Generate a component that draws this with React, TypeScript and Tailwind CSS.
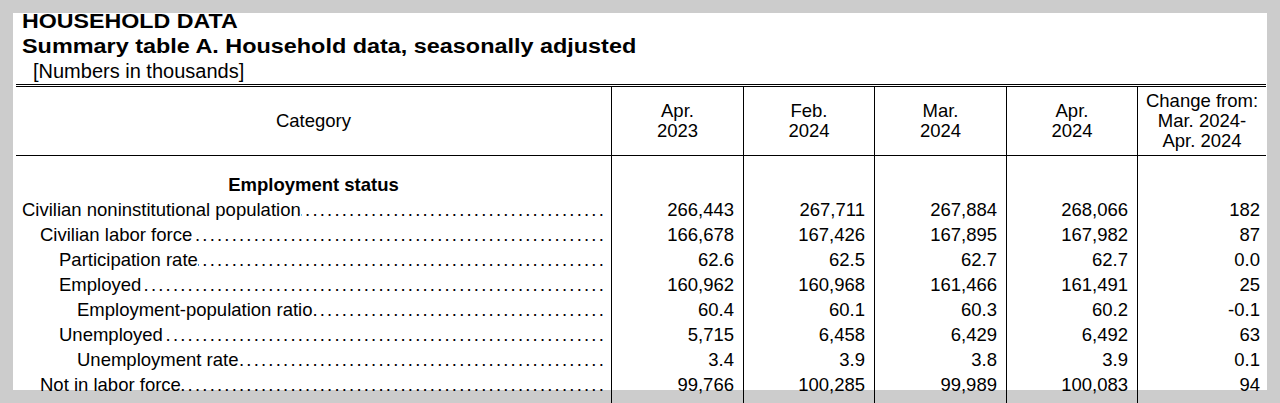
import React from "react";

type Row = { label: string; indent: number; v: string[] };

const rows: Row[] = [
  { label: "Civilian noninstitutional population", indent: 0, v: ["266,443", "267,711", "267,884", "268,066", "182"] },
  { label: "Civilian labor force", indent: 1, v: ["166,678", "167,426", "167,895", "167,982", "87"] },
  { label: "Participation rate", indent: 2, v: ["62.6", "62.5", "62.7", "62.7", "0.0"] },
  { label: "Employed", indent: 2, v: ["160,962", "160,968", "161,466", "161,491", "25"] },
  { label: "Employment-population ratio", indent: 3, v: ["60.4", "60.1", "60.3", "60.2", "-0.1"] },
  { label: "Unemployed", indent: 2, v: ["5,715", "6,458", "6,429", "6,492", "63"] },
  { label: "Unemployment rate", indent: 3, v: ["3.4", "3.9", "3.8", "3.9", "0.1"] },
  { label: "Not in labor force", indent: 1, v: ["99,766", "100,285", "99,989", "100,083", "94"] },
];

const indentClass = ["pl-[6px]", "pl-[24px]", "pl-[43px]", "pl-[61px]"];

const headers: string[][] = [
  ["Apr.", "2023"],
  ["Feb.", "2024"],
  ["Mar.", "2024"],
  ["Apr.", "2024"],
  ["Change from:", "Mar. 2024-", "Apr. 2024"],
];

const DOTS = ".".repeat(140);

export default function App() {
  return (
    <div
      className="h-[403px] w-[1280px] overflow-hidden bg-[#cccccc] pt-[13px] px-[13px] text-black"
      style={{ fontFamily: '"Liberation Sans", Arial, Helvetica, sans-serif' }}
    >
      <div className="flex h-[377px] flex-col bg-white">
        {/* Titles */}
        <div className="pl-[9px]">
          <div className="text-[20px] font-bold leading-[17px]">
            <span className="inline-block origin-left scale-x-[1.16] whitespace-nowrap">HOUSEHOLD DATA</span>
          </div>
          <div className="pt-[4px] text-[20px] leading-[25px]">
            <div className="font-bold">
              <span className="inline-block origin-left scale-x-[1.17] whitespace-nowrap">
                Summary table A. Household data, seasonally adjusted
              </span>
            </div>
            <div className="pl-[11px]">[Numbers in thousands]</div>
          </div>
        </div>

        {/* Table */}
        <div className="ml-[3px] grid w-[1250px] grid-cols-[595px_132px_131px_132px_131px_129px] border-t-[3px] border-double border-black text-[18.5px] leading-[25px]">
          {/* Header */}
          <div className="flex h-[69px] items-center justify-center border-b border-black leading-[20px]">Category</div>
          {headers.map((h, i) => (
            <div
              key={i}
              className="flex h-[69px] flex-col items-center justify-center border-b border-l border-black text-center leading-[20px]"
            >
              {h.map((line, j) => (
                <div key={j} className="whitespace-nowrap">
                  {line}
                </div>
              ))}
            </div>
          ))}

          {/* Section heading */}
          <div className="pt-[16px] text-center font-bold">Employment status</div>
          {[0, 1, 2, 3, 4].map((i) => (
            <div key={i} className="border-l border-black pt-[16px]" />
          ))}

          {/* Data rows */}
          {rows.map((r, ri) => (
            <React.Fragment key={ri}>
              <div className={`flex min-w-0 pr-[5px] ${indentClass[r.indent]}`}>
                <span className="whitespace-nowrap">{r.label}</span>
                <span className="flex min-w-0 flex-1 justify-end overflow-hidden whitespace-nowrap">
                  <span className="tracking-[2.2px]">{DOTS}</span>
                </span>
              </div>
              {r.v.map((val, vi) => (
                <div
                  key={vi}
                  className={`border-l border-black text-right ${vi === 4 ? "pr-[6px]" : "pr-[9px]"}`}
                >
                  {val}
                </div>
              ))}
            </React.Fragment>
          ))}

          {/* continuation of column rules */}
          <div className="h-[40px]" />
          {[0, 1, 2, 3, 4].map((i) => (
            <div key={i} className="h-[40px] border-l border-black" />
          ))}
        </div>
      </div>
    </div>
  );
}
